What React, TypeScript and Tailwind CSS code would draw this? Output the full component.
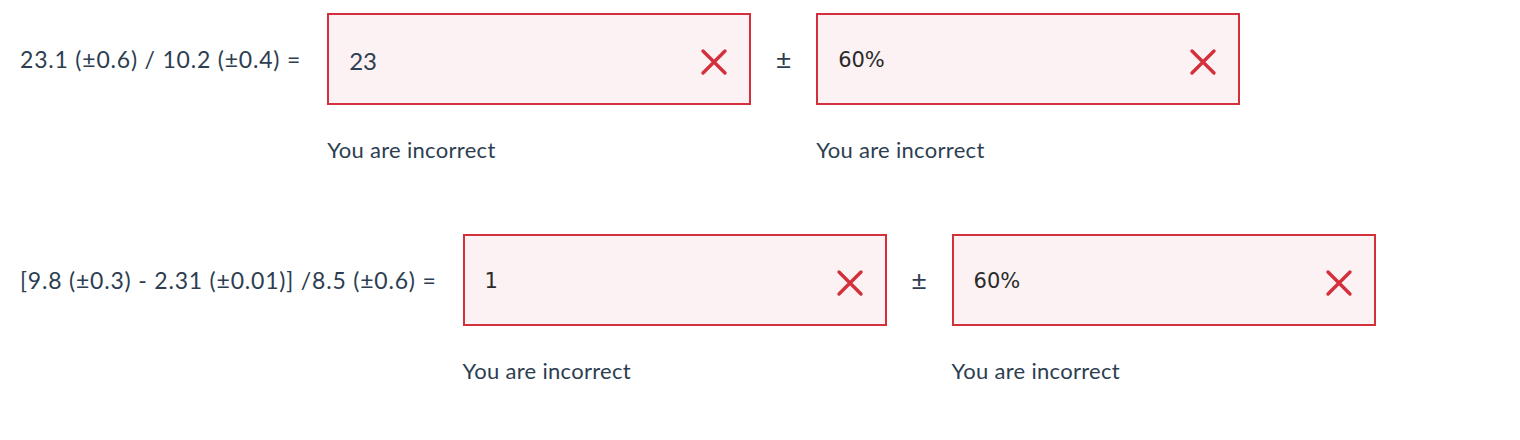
const rows = [
  { expr: "23.1 (±0.6) / 10.2 (±0.4) =", value: "23", valueDark: false, pct: "60%" },
  { expr: "[9.8 (±0.3) - 2.31 (±0.01)] /8.5 (±0.6) =", value: "1", valueDark: true, pct: "60%" },
];

const CrossIcon = () => (
  <svg className="w-[28px] h-[28px] shrink-0" viewBox="0 0 28 28" fill="none">
    <path
      d="M3 3L25 25M25 3L3 25"
      stroke="#d3303c"
      strokeWidth={3.4}
      strokeLinecap="round"
    />
  </svg>
);

const AnswerField = ({ value, dark }: { value: string; dark: boolean }) => (
  <div className="flex flex-col">
    <div className="w-[424px] h-[92px] border-2 border-[#d3303c] bg-[#fdf2f3] flex items-center justify-between pl-5 pr-[21px]">
      <span
        className={
          dark
            ? "text-[21px] text-[#2a2a2a] font-['DejaVu_Sans',sans-serif] pt-1"
            : "text-[24px] text-[#2c3e50] font-['Lato',sans-serif] pt-1"
        }
      >
        {value}
      </span>
      <div className="pt-[6px]">
        <CrossIcon />
      </div>
    </div>
    <p className="mt-[31px] text-[22px] leading-7 tracking-[0.3px] text-[#2c3e50] font-['Lato',sans-serif]">
      You are incorrect
    </p>
  </div>
);

export default function App() {
  return (
    <div className="min-h-screen bg-white pt-[13px] font-['Lato',sans-serif]">
      {rows.map((row, i) => (
        <div key={i} className="flex items-start pl-5 mb-[70px]">
          <div className="h-[92px] flex items-center text-[23px] tracking-[0.8px] text-[#2c3e50] whitespace-nowrap">
            {row.expr}
          </div>
          <div className="ml-[26px]">
            <AnswerField value={row.value} dark={row.valueDark} />
          </div>
          <div className="h-[92px] w-[65px] flex items-center justify-center text-[27px] text-[#2c3e50]">
            ±
          </div>
          <AnswerField value={row.pct} dark={true} />
        </div>
      ))}
    </div>
  );
}
